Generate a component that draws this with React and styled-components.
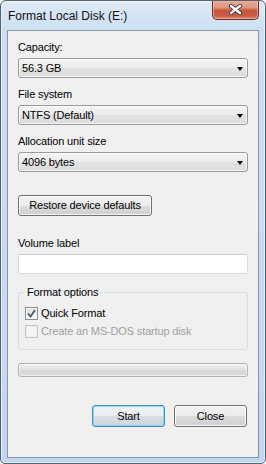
import React from 'react';
import styled, { createGlobalStyle } from 'styled-components';

const FONT = `"Liberation Sans", Arial, sans-serif`;

const Global = createGlobalStyle`
  html, body { margin: 0; padding: 0; background: #ffffff; }
  body { font-family: ${FONT}; font-size: 11px; letter-spacing: -0.15px; color: #000; }
  * { box-sizing: border-box; }
`;

const Window = styled.div`
  width: 266px;
  height: 464px;
  border: 1px solid #56616f;
  border-radius: 6px 6px 5px 5px;
  background: linear-gradient(180deg, #dfeaf7 0px, #cddff2 29px, #c2d7ef 100%);
  box-shadow: inset 0 0 0 1px rgba(255, 255, 255, 0.55);
  display: flex;
  flex-direction: column;
  overflow: hidden;
`;

const TitleBar = styled.div`
  height: 29px;
  flex: none;
  display: flex;
  align-items: flex-start;
  padding-left: 7px;
`;

const Title = styled.div`
  margin-top: 8px;
  line-height: 15px;
  font-size: 12px;
  letter-spacing: 0;
  color: #111;
`;

const CloseBtn = styled.div`
  margin-left: auto;
  margin-right: 6px;
  margin-top: -1px;
  width: 47px;
  height: 20px;
  border: 1px solid #6b2a22;
  border-top: none;
  border-radius: 0 0 5px 5px;
  background: linear-gradient(180deg, #eab0a0 0%, #de9280 40%, #c8553a 55%, #c95a3f 80%, #d98568 100%);
  box-shadow: inset 0 0 0 1px rgba(255, 215, 205, 0.5);
  display: flex;
  align-items: center;
  justify-content: center;
`;

const Client = styled.div`
  flex: 1;
  margin: 0 6px 5px;
  border: 1px solid #8496aa;
  background: #f0f0f0;
  padding: 9px 10px 0 10px;
  display: flex;
  flex-direction: column;
`;

const Label = styled.div`
  height: 15px;
  line-height: 15px;
  margin-top: ${p => p.$mt || 0}px;
  color: ${p => (p.$disabled ? '#a0a0a0' : '#000')};
  white-space: nowrap;
`;

const Combo = styled.div`
  margin-top: 3px;
  height: 20px;
  border: 1px solid #9a9a9a;
  border-radius: 3px;
  background: linear-gradient(180deg, #f4f4f4 0%, #ececec 50%, #e2e2e2 51%, #dcdcdc 100%);
  box-shadow: inset 0 0 0 1px rgba(255, 255, 255, 0.7);
  display: flex;
  align-items: center;
  padding: 0 4px 0 3px;
  line-height: 15px;
`;

const ComboText = styled.span`
  flex: 1;
`;

const Arrow = styled.span`
  width: 0;
  height: 0;
  border-left: 3.5px solid transparent;
  border-right: 3.5px solid transparent;
  border-top: 4px solid #000;
  margin-top: 1px;
`;

const Button = styled.div`
  height: ${p => p.$h || 21}px;
  width: ${p => p.$w}px;
  margin-top: ${p => p.$mt || 0}px;
  border: 1px solid ${p => (p.$default ? '#3a8ec9' : '#707070')};
  border-radius: 3px;
  background: ${p =>
    p.$default
      ? 'linear-gradient(180deg, #f1f4f6 0%, #e9edf0 50%, #d9dee2 51%, #cfd5d9 100%)'
      : 'linear-gradient(180deg, #f2f2f2 0%, #ebebeb 50%, #dddddd 51%, #cfcfcf 100%)'};
  box-shadow: inset 0 0 0 1px ${p => (p.$default ? 'rgba(120,210,245,0.75)' : 'rgba(255,255,255,0.8)')};
  display: flex;
  align-items: center;
  justify-content: center;
  line-height: 15px;
  flex: none;
`;

const TextBox = styled.div`
  margin-top: 3px;
  height: 20px;
  border: 1px solid #d9dde2;
  border-top-color: #c9ced4;
  border-radius: 2px;
  background: #ffffff;
`;

const Group = styled.div`
  position: relative;
  margin-top: 18px;
  height: 58px;
  border: 1px solid #d5dfe5;
  border-radius: 3px;
  padding: 13px 0 0 6px;
  display: flex;
  flex-direction: column;
  gap: 3px;
`;

const Legend = styled.div`
  position: absolute;
  top: -8px;
  left: 6px;
  padding: 0 2px;
  background: #f0f0f0;
  line-height: 15px;
`;

const CheckRow = styled.div`
  height: 15px;
  display: flex;
  align-items: center;
  gap: 3px;
  color: ${p => (p.$disabled ? '#a0a0a0' : '#000')};
  line-height: 15px;
`;

const Box = styled.div`
  width: 13px;
  height: 13px;
  border: 1px solid ${p => (p.$disabled ? '#c6c6c6' : '#8e8f8f')};
  background: ${p =>
    p.$disabled
      ? '#f4f4f4'
      : 'linear-gradient(135deg, #dcdcdc 0%, #f0f0f0 60%, #ffffff 100%)'};
  box-shadow: inset 0 0 0 1px ${p => (p.$disabled ? '#ececec' : '#f4f4f4')};
  display: flex;
  align-items: center;
  justify-content: center;
  flex: none;
`;

const Progress = styled.div`
  margin-top: 13px;
  height: 14px;
  border: 1px solid #b2b2b2;
  border-radius: 3px;
  background: linear-gradient(180deg, #f3f3f3 0%, #e2e2e2 40%, #d4d4d4 60%, #dcdcdc 100%);
  box-shadow: inset 0 0 0 1px rgba(255, 255, 255, 0.6);
`;

const ButtonRow = styled.div`
  margin-top: 28px;
  display: flex;
  justify-content: flex-end;
  gap: 9px;
  padding-right: 1px;
`;

const CloseGlyph = () => (
  <svg width="15" height="11" viewBox="0 0 15 11">
    <path d="M3 2 L12 9 M12 2 L3 9" stroke="#3d3d3d" strokeWidth="4.2" strokeLinecap="round" fill="none" />
    <path d="M3 2 L12 9 M12 2 L3 9" stroke="#ffffff" strokeWidth="2.4" strokeLinecap="round" fill="none" />
  </svg>
);

const CheckGlyph = () => (
  <svg width="9" height="9" viewBox="0 0 9 9">
    <path d="M1 4.5 L3.5 7.5 L8 1" stroke="#4a5a6e" strokeWidth="1.8" fill="none" />
  </svg>
);

const Field = ({ label, value, mt }) => (
  <>
    <Label $mt={mt}>{label}</Label>
    <Combo>
      <ComboText>{value}</ComboText>
      <Arrow />
    </Combo>
  </>
);

export default function App() {
  return (
    <>
      <Global />
      <Window>
        <TitleBar>
          <Title>Format Local Disk (E:)</Title>
          <CloseBtn>
            <CloseGlyph />
          </CloseBtn>
        </TitleBar>
        <Client>
          <Field label="Capacity:" value="56.3 GB" />
          <Field label="File system" value="NTFS (Default)" mt={9} />
          <Field label="Allocation unit size" value="4096 bytes" mt={9} />
          <Button $w={134} $mt={23}>Restore device defaults</Button>
          <Label $mt={20}>Volume label</Label>
          <TextBox />
          <Group>
            <Legend>Format options</Legend>
            <CheckRow>
              <Box>
                <CheckGlyph />
              </Box>
              Quick Format
            </CheckRow>
            <CheckRow $disabled>
              <Box $disabled />
              Create an MS-DOS startup disk
            </CheckRow>
          </Group>
          <Progress />
          <ButtonRow>
            <Button $w={73} $h={22} $default>Start</Button>
            <Button $w={73} $h={22}>Close</Button>
          </ButtonRow>
        </Client>
      </Window>
    </>
  );
}
